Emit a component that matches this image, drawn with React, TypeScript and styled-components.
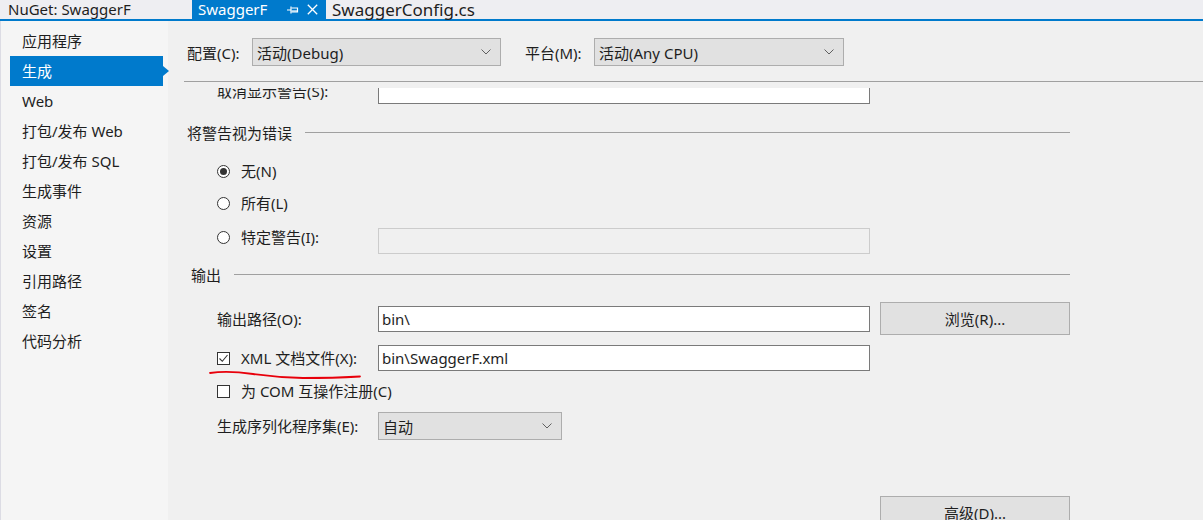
import React from 'react';
import styled, { createGlobalStyle } from 'styled-components';

const GlobalStyle = createGlobalStyle`
  html, body {
    margin: 0;
    padding: 0;
    width: 1203px;
    height: 520px;
    overflow: hidden;
    background: #f0f0f0;
  }
  body {
    font-family: "Noto Sans", "Noto Sans CJK SC", sans-serif;
    font-size: 15px;
    color: #1e1e1e;
  }
`;

const Page = styled.div`
  display: flex;
  flex-direction: column;
  width: 1203px;
  height: 520px;
`;

// ---- tab strip ----
const TabBar = styled.div`
  display: flex;
  height: 19px;
  background: #eeeef2;
  border-bottom: 2px solid #007acc;
`;

const Tab = styled.div<{ active?: boolean; width: number; pad: number; size?: number }>`
  display: flex;
  align-items: center;
  width: ${p => p.width}px;
  padding-left: ${p => p.pad}px;
  box-sizing: border-box;
  height: 19px;
  line-height: 19px;
  font-size: ${p => p.size ?? 15}px;
  white-space: nowrap;
  background: ${p => (p.active ? '#007acc' : 'transparent')};
  color: ${p => (p.active ? '#ffffff' : '#1e1e1e')};
`;

const TabTitle = styled.span`
  flex: 1;
`;

const TabIcon = styled.span`
  display: flex;
  align-items: center;
  margin-right: 8px;
`;

// ---- body ----
const Body = styled.div`
  flex: 1;
  display: flex;
  min-height: 0;
`;

const Sidebar = styled.div`
  width: 168px;
  flex-shrink: 0;
  background: #f5f5f5;
  border-left: 1px solid #dcdce4;
  box-sizing: border-box;
  padding-top: 5px;
`;

const NavItem = styled.div<{ selected?: boolean }>`
  position: relative;
  height: 30px;
  line-height: 30px;
  margin-left: 9px;
  width: 153px;
  padding-left: 12px;
  box-sizing: border-box;
  white-space: nowrap;
  background: ${p => (p.selected ? '#007acc' : 'transparent')};
  color: ${p => (p.selected ? '#ffffff' : '#1e1e1e')};
`;

const NavArrow = styled.span`
  position: absolute;
  right: -6px;
  top: 10px;
  width: 0;
  height: 0;
  border-top: 5px solid transparent;
  border-bottom: 5px solid transparent;
  border-left: 6px solid #007acc;
`;

const Main = styled.div`
  flex: 1;
  display: flex;
  flex-direction: column;
  background: #f0f0f0;
  min-width: 0;
`;

const ConfigRow = styled.div`
  display: flex;
  align-items: center;
  padding: 17px 0 0 19px;
  height: 28px;
`;

const ConfigLabel = styled.span<{ width: number; lead?: number }>`
  width: ${p => p.width}px;
  padding-left: ${p => p.lead ?? 0}px;
  box-sizing: border-box;
  flex-shrink: 0;
  white-space: nowrap;
`;

const Select = styled.div<{ width: number }>`
  display: flex;
  align-items: center;
  justify-content: space-between;
  width: ${p => p.width}px;
  height: 28px;
  box-sizing: border-box;
  padding: 0 9px 0 4px;
  background: #e1e1e1;
  border: 1px solid #adadad;
  white-space: nowrap;
`;

const Separator = styled.div`
  height: 1px;
  background: #a0a0a0;
  margin: 15px 0 0 16px;
`;

const ScrollArea = styled.div`
  flex: 1;
  overflow: hidden;
  margin-top: 6px;
`;

const Content = styled.div`
  margin-top: -10px;
  display: flex;
  flex-direction: column;
`;

const Row = styled.div<{ gap: number; height: number; top?: boolean }>`
  position: relative;
  display: flex;
  align-items: ${p => (p.top ? 'flex-start' : 'center')};
  margin-top: ${p => p.gap}px;
  height: ${p => p.height}px;
  padding-left: 49px;
`;

const FieldLabel = styled.span`
  width: 161px;
  flex-shrink: 0;
  white-space: nowrap;
  line-height: 18px;
`;

const TextBox = styled.div<{ disabled?: boolean }>`
  display: flex;
  align-items: center;
  width: 492px;
  height: 26px;
  box-sizing: border-box;
  padding-left: 3px;
  background: ${p => (p.disabled ? '#f0f0f0' : '#ffffff')};
  border: 1px solid ${p => (p.disabled ? '#cccccc' : '#7a7a7a')};
  white-space: nowrap;
`;

const Button = styled.div`
  display: flex;
  align-items: center;
  justify-content: center;
  width: 190px;
  height: 33px;
  box-sizing: border-box;
  margin-left: 10px;
  background: #e1e1e1;
  border: 1px solid #adadad;
  white-space: nowrap;
`;

const Heading = styled.div<{ gap: number; indent: number }>`
  display: flex;
  align-items: center;
  margin-top: ${p => p.gap}px;
  height: 20px;
  padding-left: ${p => p.indent}px;
  padding-right: 133px;
  white-space: nowrap;
`;

const HeadingLine = styled.div`
  flex: 1;
  height: 1px;
  background: #a0a0a0;
  margin-left: 13px;
`;

const Option = styled.div`
  display: flex;
  align-items: center;
  height: 18px;
  line-height: 18px;
  white-space: nowrap;
`;

const Radio = styled.span<{ checked?: boolean }>`
  width: 13px;
  height: 13px;
  box-sizing: border-box;
  border-radius: 50%;
  border: 1px solid #333333;
  background: #ffffff;
  margin-right: 11px;
  display: flex;
  align-items: center;
  justify-content: center;
  flex-shrink: 0;
  &::after {
    content: '';
    display: ${p => (p.checked ? 'block' : 'none')};
    width: 7px;
    height: 7px;
    border-radius: 50%;
    background: #333333;
  }
`;

const Checkbox = styled.span`
  width: 13px;
  height: 13px;
  box-sizing: border-box;
  border: 1px solid #333333;
  background: #ffffff;
  margin-right: 11px;
  display: flex;
  align-items: center;
  justify-content: center;
  flex-shrink: 0;
`;

const ButtonRow = styled.div`
  display: flex;
  margin-top: 57px;
  padding-left: 702px;
`;

const Annotation = styled.svg`
  position: absolute;
  left: 40px;
  top: 25px;
  overflow: visible;
`;

const Chevron = () => (
  <svg width="10" height="6" viewBox="0 0 10 6">
    <path d="M0.5 0.5 L5 5 L9.5 0.5" fill="none" stroke="#606060" strokeWidth="1" />
  </svg>
);

const Check = () => (
  <svg width="11" height="11" viewBox="0 0 11 11">
    <path d="M1.5 5.5 L4.3 8.3 L9.5 2" fill="none" stroke="#333333" strokeWidth="1.1" />
  </svg>
);

const PinIcon = () => (
  <svg width="12" height="10" viewBox="0 0 12 10">
    <path d="M0 5 H4 M4 1.5 V8.5" stroke="#ffffff" strokeWidth="1.2" fill="none" />
    <path d="M4.5 3 H10.5 V7 H4.5" stroke="#ffffff" strokeWidth="1.2" fill="none" />
    <path d="M4.5 6 H10" stroke="#ffffff" strokeWidth="1.2" fill="none" />
  </svg>
);

const CloseIcon = () => (
  <svg width="11" height="11" viewBox="0 0 11 11">
    <path d="M0.8 0.8 L10.2 10.2 M10.2 0.8 L0.8 10.2" stroke="#ffffff" strokeWidth="1.3" fill="none" />
  </svg>
);

const navItems = [
  '应用程序',
  '生成',
  'Web',
  '打包/发布 Web',
  '打包/发布 SQL',
  '生成事件',
  '资源',
  '设置',
  '引用路径',
  '签名',
  '代码分析',
];

export default function App() {
  return (
    <>
      <GlobalStyle />
      <Page>
        <TabBar>
          <Tab width={192} pad={8}>NuGet: SwaggerF</Tab>
          <Tab active width={134} pad={6}>
            <TabTitle>SwaggerF</TabTitle>
            <TabIcon><PinIcon /></TabIcon>
            <TabIcon><CloseIcon /></TabIcon>
          </Tab>
          <Tab width={200} pad={6} size={17}>SwaggerConfig.cs</Tab>
        </TabBar>

        <Body>
          <Sidebar>
            {navItems.map(name => (
              <NavItem key={name} selected={name === '生成'}>
                {name}
                {name === '生成' && <NavArrow />}
              </NavItem>
            ))}
          </Sidebar>

          <Main>
            <ConfigRow>
              <ConfigLabel width={65}>配置(C):</ConfigLabel>
              <Select width={249}>
                活动(Debug)
                <Chevron />
              </Select>
              <ConfigLabel width={93} lead={24}>平台(M):</ConfigLabel>
              <Select width={250}>
                活动(Any CPU)
                <Chevron />
              </Select>
            </ConfigRow>
            <Separator />

            <ScrollArea>
              <Content>
                <Row gap={0} height={26}>
                  <FieldLabel>取消显示警告(S):</FieldLabel>
                  <TextBox />
                </Row>

                <Heading gap={18} indent={19}>
                  将警告视为错误
                  <HeadingLine />
                </Heading>

                <Row gap={18} height={22}>
                  <Option><Radio checked />无(N)</Option>
                </Row>
                <Row gap={10} height={22}>
                  <Option><Radio />所有(L)</Option>
                </Row>
                <Row gap={14} height={26} top>
                  <FieldLabel>
                    <Option><Radio />特定警告(I):</Option>
                  </FieldLabel>
                  <TextBox disabled />
                </Row>

                <Heading gap={10} indent={23}>
                  输出
                  <HeadingLine />
                </Heading>

                <Row gap={18} height={33}>
                  <FieldLabel>输出路径(O):</FieldLabel>
                  <TextBox>bin\</TextBox>
                  <Button>浏览(R)...</Button>
                </Row>
                <Row gap={10} height={26}>
                  <FieldLabel>
                    <Option><Checkbox><Check /></Checkbox>XML 文档文件(X):</Option>
                  </FieldLabel>
                  <TextBox>bin\SwaggerF.xml</TextBox>
                  <Annotation width="156" height="10" viewBox="0 0 156 10">
                    <path
                      d="M2 3 Q20 0.5 45 4 T95 8 Q125 8 152 6.5"
                      fill="none"
                      stroke="#e8000b"
                      strokeWidth="1.8"
                      strokeLinecap="round"
                    />
                  </Annotation>
                </Row>
                <Row gap={10} height={20}>
                  <Option><Checkbox />为 COM 互操作注册(C)</Option>
                </Row>
                <Row gap={12} height={26}>
                  <FieldLabel>生成序列化程序集(E):</FieldLabel>
                  <Select width={184}>
                    自动
                    <Chevron />
                  </Select>
                </Row>

                <ButtonRow>
                  <Button>高级(D)...</Button>
                </ButtonRow>
              </Content>
            </ScrollArea>
          </Main>
        </Body>
      </Page>
    </>
  );
}
